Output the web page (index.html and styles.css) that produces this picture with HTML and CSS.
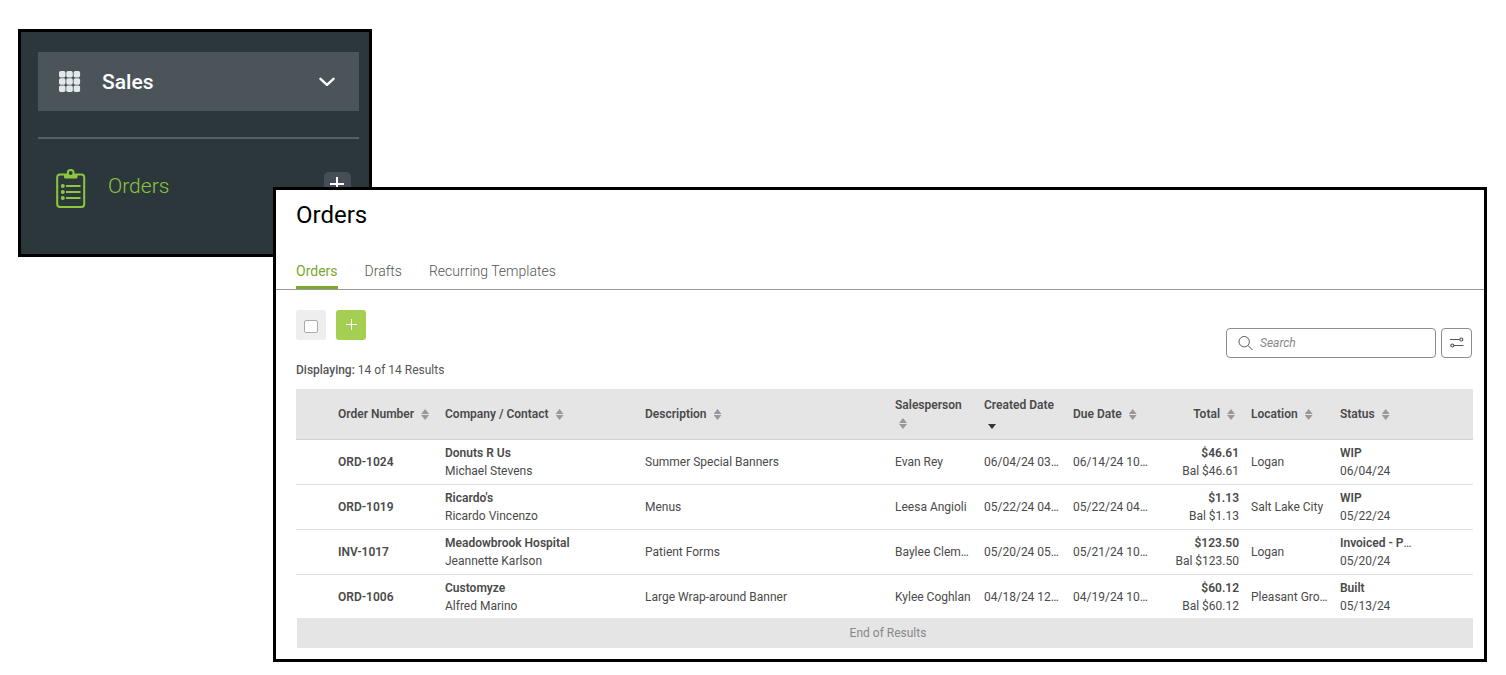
FILE: index.html
```html
<!DOCTYPE html>
<html lang="en">

<head>
     <meta charset="UTF-8">
     <meta name="viewport" content="width=device-width, initial-scale=1.0">
     <title>Orders</title>
     <link rel="stylesheet" href="styles.css">
</head>

<body>
     <!-- sidebar  -->
     <nav class="sidebar">
          <button class="module-btn" type="button">
               <svg class="grid-icon" width="22" height="24" viewBox="0 0 22 24" fill="#e2e8ec">
                    <rect x="0" y="1" width="6.500" height="6.500" rx="1.700" />
                    <rect x="7.300" y="1" width="6.500" height="6.500" rx="1.700" />
                    <rect x="14.600" y="1" width="6.500" height="6.500" rx="1.700" />
                    <rect x="0" y="8.200" width="6.500" height="6.500" rx="1.700" />
                    <rect x="7.300" y="8.200" width="6.500" height="6.500" rx="1.700" />
                    <rect x="14.600" y="8.200" width="6.500" height="6.500" rx="1.700" />
                    <rect x="0" y="15.400" width="6.500" height="6.500" rx="1.700" />
                    <rect x="7.300" y="15.400" width="6.500" height="6.500" rx="1.700" />
                    <rect x="14.600" y="15.400" width="6.500" height="6.500" rx="1.700" />
               </svg>
               <span>Sales</span>
               <svg class="chevron" width="16" height="10" viewBox="0 0 16 10" fill="none" stroke="#fff" stroke-width="2.400" stroke-linecap="round" stroke-linejoin="round">
                    <path d="M1.500 1.800 8 7.800 14.500 1.800" />
               </svg>
          </button>
          <div class="side-item">
               <a href="#" class="side-link">
                    <svg width="30" height="40" viewBox="0 0 30 40" fill="none" stroke="#8dc63f" stroke-width="2">
                         <rect x="1.200" y="5.500" width="27" height="32.500" rx="2.800" />
                         <path d="M8 5.500h13.500V8a1.500 1.500 0 0 1-1.500 1.500H9.500A1.500 1.500 0 0 1 8 8z" fill="#8dc63f" stroke="none" />
                         <circle cx="14.700" cy="4" r="2.900" fill="#2c373c" />
                         <path d="M10 16.900h14.500M10 22.900h14.500M10 28.900h14.500" />
                         <path d="M6.800 16.900h.01M6.800 22.900h.01M6.800 28.900h.01" stroke-width="4" stroke-linecap="round" />
                    </svg>
                    <span>Orders</span>
               </a>
               <button class="side-add" type="button" aria-label="Add order">
                    <svg width="14" height="15" viewBox="0 0 14 15" stroke="#fff" stroke-width="2">
                         <path d="M7 1v13M0 8h14" />
                    </svg>
               </button>
          </div>
     </nav>

     <!-- orders list  -->
     <main class="orders">
          <h1>Orders</h1>
          <div class="tabs">
               <a href="#" class="tab active">Orders</a>
               <a href="#" class="tab">Drafts</a>
               <a href="#" class="tab">Recurring Templates</a>
          </div>

          <div class="content">
               <div class="toolbar">
                    <label class="select-all"><input type="checkbox" aria-label="Select all"></label>
                    <button class="add-btn" type="button" aria-label="New order">
                         <svg width="11" height="11" viewBox="0 0 11 11" stroke="#fff">
                              <path d="M5.500 0v11M0 5.500h11" />
                         </svg>
                    </button>
                    <div class="search-area">
                         <label class="search-box">
                              <svg width="15" height="15" viewBox="0 0 15 15" fill="none" stroke="#555" stroke-width="1">
                                   <circle cx="6.200" cy="5.700" r="5.200" />
                                   <path d="M9.900 9.400 14.500 14" />
                              </svg>
                              <input type="text" placeholder="Search" aria-label="Search">
                         </label>
                         <button class="filter-btn" type="button" aria-label="Filters">
                              <svg width="14" height="12" viewBox="0 0 14 12" fill="none" stroke="#555" stroke-width="1.200">
                                   <path d="M0 2.500h9.500M4 8.500h9.500" />
                                   <circle cx="11.300" cy="2.500" r="1.500" />
                                   <circle cx="2.300" cy="8.500" r="1.500" />
                              </svg>
                         </button>
                    </div>
               </div>

               <p class="result-count"><b>Displaying:</b> 14 of 14 Results</p>

               <table>
                    <colgroup>
                         <col class="col-check">
                         <col class="col-order">
                         <col class="col-company">
                         <col class="col-desc">
                         <col class="col-std">
                         <col class="col-std">
                         <col class="col-std">
                         <col class="col-std">
                         <col class="col-std">
                         <col class="col-std">
                         <col class="col-end">
                    </colgroup>
                    <thead>
                         <tr>
                              <td></td>
                              <th>Order Number <span class="sort"></span></th>
                              <th>Company / Contact <span class="sort"></span></th>
                              <th>Description <span class="sort"></span></th>
                              <th>Salesperson <span class="sort"></span></th>
                              <th>Created Date <span class="sort desc"></span></th>
                              <th>Due Date <span class="sort"></span></th>
                              <th class="num">Total <span class="sort"></span></th>
                              <th>Location <span class="sort"></span></th>
                              <th>Status <span class="sort"></span></th>
                              <td></td>
                         </tr>
                    </thead>
                    <tbody>
                         <tr>
                              <td></td>
                              <td><b>ORD-1024</b></td>
                              <td><b>Donuts R Us</b><br>Michael Stevens</td>
                              <td>Summer Special Banners</td>
                              <td>Evan Rey</td>
                              <td>06/04/24 03…</td>
                              <td>06/14/24 10…</td>
                              <td class="num"><b>$46.61</b><br>Bal $46.61</td>
                              <td>Logan</td>
                              <td><b>WIP</b><br>06/04/24</td>
                              <td></td>
                         </tr>
                         <tr>
                              <td></td>
                              <td><b>ORD-1019</b></td>
                              <td><b>Ricardo's</b><br>Ricardo Vincenzo</td>
                              <td>Menus</td>
                              <td>Leesa Angioli</td>
                              <td>05/22/24 04…</td>
                              <td>05/22/24 04…</td>
                              <td class="num"><b>$1.13</b><br>Bal $1.13</td>
                              <td>Salt Lake City</td>
                              <td><b>WIP</b><br>05/22/24</td>
                              <td></td>
                         </tr>
                         <tr>
                              <td></td>
                              <td><b>INV-1017</b></td>
                              <td><b>Meadowbrook Hospital</b><br>Jeannette Karlson</td>
                              <td>Patient Forms</td>
                              <td>Baylee Clem…</td>
                              <td>05/20/24 05…</td>
                              <td>05/21/24 10…</td>
                              <td class="num"><b>$123.50</b><br>Bal $123.50</td>
                              <td>Logan</td>
                              <td><b>Invoiced - P</b>…<br>05/20/24</td>
                              <td></td>
                         </tr>
                         <tr>
                              <td></td>
                              <td><b>ORD-1006</b></td>
                              <td><b>Customyze</b><br>Alfred Marino</td>
                              <td>Large Wrap-around Banner</td>
                              <td>Kylee Coghlan</td>
                              <td>04/18/24 12…</td>
                              <td>04/19/24 10…</td>
                              <td class="num"><b>$60.12</b><br>Bal $60.12</td>
                              <td>Pleasant Gro…</td>
                              <td><b>Built</b><br>05/13/24</td>
                              <td></td>
                         </tr>
                    </tbody>
               </table>
               <div class="end-results">End of Results</div>
          </div>
     </main>
</body>

</html>
```
FILE: styles.css
```css
* {
     padding: 0;
     margin: 0;
     box-sizing: border-box;
     font-family: Roboto, Arial, sans-serif;
}

body {
     background: #fff;
     color: #4a4a4a;
     font-size: 12px;
     line-height: 18px;
     padding: 29px 19px 13px 18px;
}

a {
     text-decoration: none;
}

button {
     border: none;
     cursor: pointer;
}

svg {
     display: block;
     flex-shrink: 0;
}

/* sidebar */
.sidebar {
     width: 354px;
     height: 228px;
     border: 3px solid #000;
     background: #2c373c;
     padding: 20px 10px 0 17px;
}

.module-btn {
     display: flex;
     align-items: center;
     width: 100%;
     height: 59px;
     padding: 0 24px 0 21px;
     background: #4a5459;
     color: #fff;
     font-size: 21px;
     font-weight: 500;
}

.module-btn span {
     margin-left: 21px;
}

.chevron {
     margin-left: auto;
}

.side-item {
     display: flex;
     justify-content: space-between;
     margin-top: 26px;
     padding: 30px 8px 0 18px;
     border-top: 2px solid #566065;
}

.side-link {
     display: flex;
     gap: 22px;
     color: #8dc63f;
     font-size: 21px;
     font-weight: 300;
     line-height: 34px;
}

.side-add {
     display: flex;
     justify-content: center;
     width: 27px;
     height: 27px;
     margin-top: 3px;
     padding: 4px 1px 0 0;
     border-radius: 5px;
     background: #464d57;
}

/* orders window, lies over the sidebar corner */
.orders {
     position: relative;
     margin: -70px 0 0 255px;
     border: 3px solid #000;
     background: #fff;
}

.orders h1 {
     padding: 10px 20px 0;
     color: #000;
     font-size: 24px;
     font-weight: 400;
     line-height: 30px;
}

.tabs {
     display: flex;
     gap: 27px;
     margin-top: 31px;
     padding: 0 20px;
     border-bottom: 1px solid #999;
}

.tab {
     padding-bottom: 5px;
     border-bottom: 3px solid transparent;
     color: #555;
     font-size: 14px;
     font-weight: 300;
     line-height: 20px;
}

.tab.active {
     color: #7ba82d;
     font-weight: 400;
     border-color: #7ba82d;
}

.content {
     padding: 20px 11px 11px 20px;
}

.toolbar {
     display: flex;
     gap: 10px;
}

.select-all,
.add-btn {
     display: flex;
     align-items: center;
     justify-content: center;
     width: 30px;
     height: 30px;
     border-radius: 3px;
     background: #eee;
}

.select-all {
     padding-top: 3px;
}

.select-all input {
     appearance: none;
     width: 14px;
     height: 13px;
     border: 1px solid #aaa;
     border-radius: 2px;
     background: #fff;
}

.add-btn {
     padding-bottom: 1px;
     background: #a4cf52;
}

.search-area {
     display: flex;
     gap: 5px;
     margin: 18px 1px 0 auto;
}

.search-box,
.filter-btn {
     display: flex;
     align-items: center;
     height: 30px;
     border: 1px solid #8c8c8c;
     border-radius: 4px;
     background: #fff;
}

.search-box {
     gap: 7px;
     width: 210px;
     padding: 0 10px 0 11px;
}

.search-box input {
     width: 100%;
     border: none;
     outline: none;
     background: transparent;
     font-size: 12px;
}

.search-box input::placeholder {
     color: #888;
     font-style: italic;
}

.filter-btn {
     justify-content: center;
     width: 31px;
}

.result-count {
     margin: 3px 0 10px;
     color: #555;
}

.result-count b {
     font-weight: 500;
}

/* table */
table {
     width: 100%;
     table-layout: fixed;
     border-collapse: separate;
     border-spacing: 0;
}

.col-check {
     width: 36px;
}

.col-order {
     width: 107px;
}

.col-company {
     width: 200px;
}

.col-std {
     width: 89px;
}

.col-end {
     width: 50px;
}

th,
td {
     padding: 4px 6px;
     border-bottom: 1px solid #e0e0e0;
     text-align: left;
     overflow: hidden;
     white-space: nowrap;
     text-overflow: ellipsis;
}

th,
td b {
     font-weight: 600;
}

thead th,
thead td {
     height: 51px;
     border-color: #d2d2d2;
     background: #e5e5e5;
     white-space: normal;
}

tbody tr:last-child td {
     padding-bottom: 3px;
     border-bottom: none;
}

.num {
     text-align: right;
}

/* up and down arrows */
.sort {
     display: inline-block;
     width: 8px;
     height: 11px;
     margin-left: 4px;
     vertical-align: -2px;
     background: #999;
     clip-path: polygon(50% 0, 100% 5px, 0 5px, 0 6px, 100% 6px, 50% 100%, 0 6px, 0 5px);
}

.sort.desc {
     background: #333;
     clip-path: polygon(0 6px, 100% 6px, 50% 100%);
}

.num .sort {
     margin-right: 4px;
}

.end-results {
     margin-left: 1px;
     padding: 6px 0 6px 6px;
     background: #e5e5e5;
     color: #888;
     text-align: center;
}
```
